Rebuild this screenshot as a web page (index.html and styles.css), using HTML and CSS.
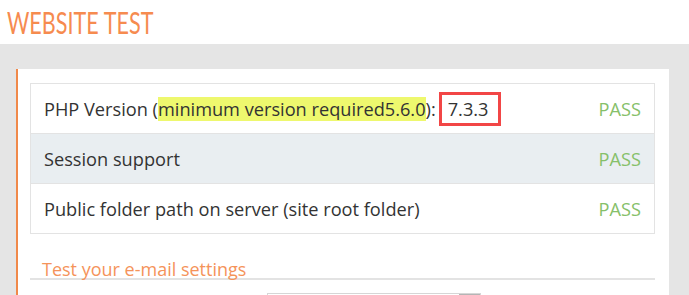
FILE: index.html
```html
<!DOCTYPE html>
<html>
<head>
<meta charset="utf-8">
<link rel="stylesheet" href="styles.css">
</head>
<body>
<header class="top">
  <h1 class="title">WEBSITE TEST</h1>
</header>
<main class="main">
  <section class="panel">
    <div class="checks">
      <div class="row">
        <span class="label">PHP Version (<span class="hl">minimum version required5.6.0</span>):<span class="ver">7.3.3</span></span>
        <span class="pass">PASS</span>
      </div>
      <div class="row alt">
        <span class="label">Session support</span>
        <span class="pass">PASS</span>
      </div>
      <div class="row">
        <span class="label">Public folder path on server (site root folder)</span>
        <span class="pass">PASS</span>
      </div>
    </div>
    <h3 class="sub">Test your e-mail settings</h3>
    <div class="form">
      <div class="field"><span class="btn"></span></div>
    </div>
  </section>
</main>
</body>
</html>
```
FILE: styles.css
```css
html, body { margin: 0; padding: 0; }
body {
  background: #e5e5e5;
  font-family: "Open Sans", "Liberation Sans", sans-serif;
  color: #333;
  overflow: hidden;
  height: 295px;
}
.top {
  background: #fff;
  height: 44px;
  padding-left: 7px;
}
.title {
  margin: 0;
  font-family: "Lato", "Open Sans", sans-serif;
  font-weight: 400;
  font-size: 30px;
  line-height: 44px;
  color: #f68b4f;
  display: inline-block;
  transform: scaleX(0.72);
  transform-origin: left center;
  white-space: nowrap;
}
.main {
  padding: 25px 20px 0 16px;
}
.panel {
  background: #fff;
  border-left: 2px solid #f0894a;
  padding: 14px 14px 0 12px;
  height: 226px;
  box-sizing: border-box;
  overflow: hidden;
}
.checks {
  border: 1px solid #e3e3e3;
  border-bottom: 0;
}
.row {
  display: flex;
  justify-content: space-between;
  align-items: center;
  height: 49px;
  border-bottom: 1px solid #e3e3e3;
  padding: 0 13px 0 13px;
  font-size: 18.2px;
}
.row.alt { background: #e9eef1; }
.hl { background: #eef86e; }
.ver {
  display: inline-block;
  border: 3px solid #f24646;
  padding: 1px 10px 1px 6px;
  margin-left: 3px;
  line-height: 26px;
}
.pass { color: #86c06a; }
.sub {
  margin: 26px 0 0;
  padding: 0 12px 0;
  font-weight: 400;
  font-size: 18px;
  color: #f5935a;
  line-height: 18px;
  border-bottom: 2px solid #e3e3e3;
}
.form {
  padding: 13px 0 0 237px;
}
.field {
  width: 212px;
  height: 24px;
  border: 1px solid #d6d6d6;
  display: flex;
  justify-content: flex-end;
}
.btn {
  width: 21px;
  background: #b5b5b5;
}
```
